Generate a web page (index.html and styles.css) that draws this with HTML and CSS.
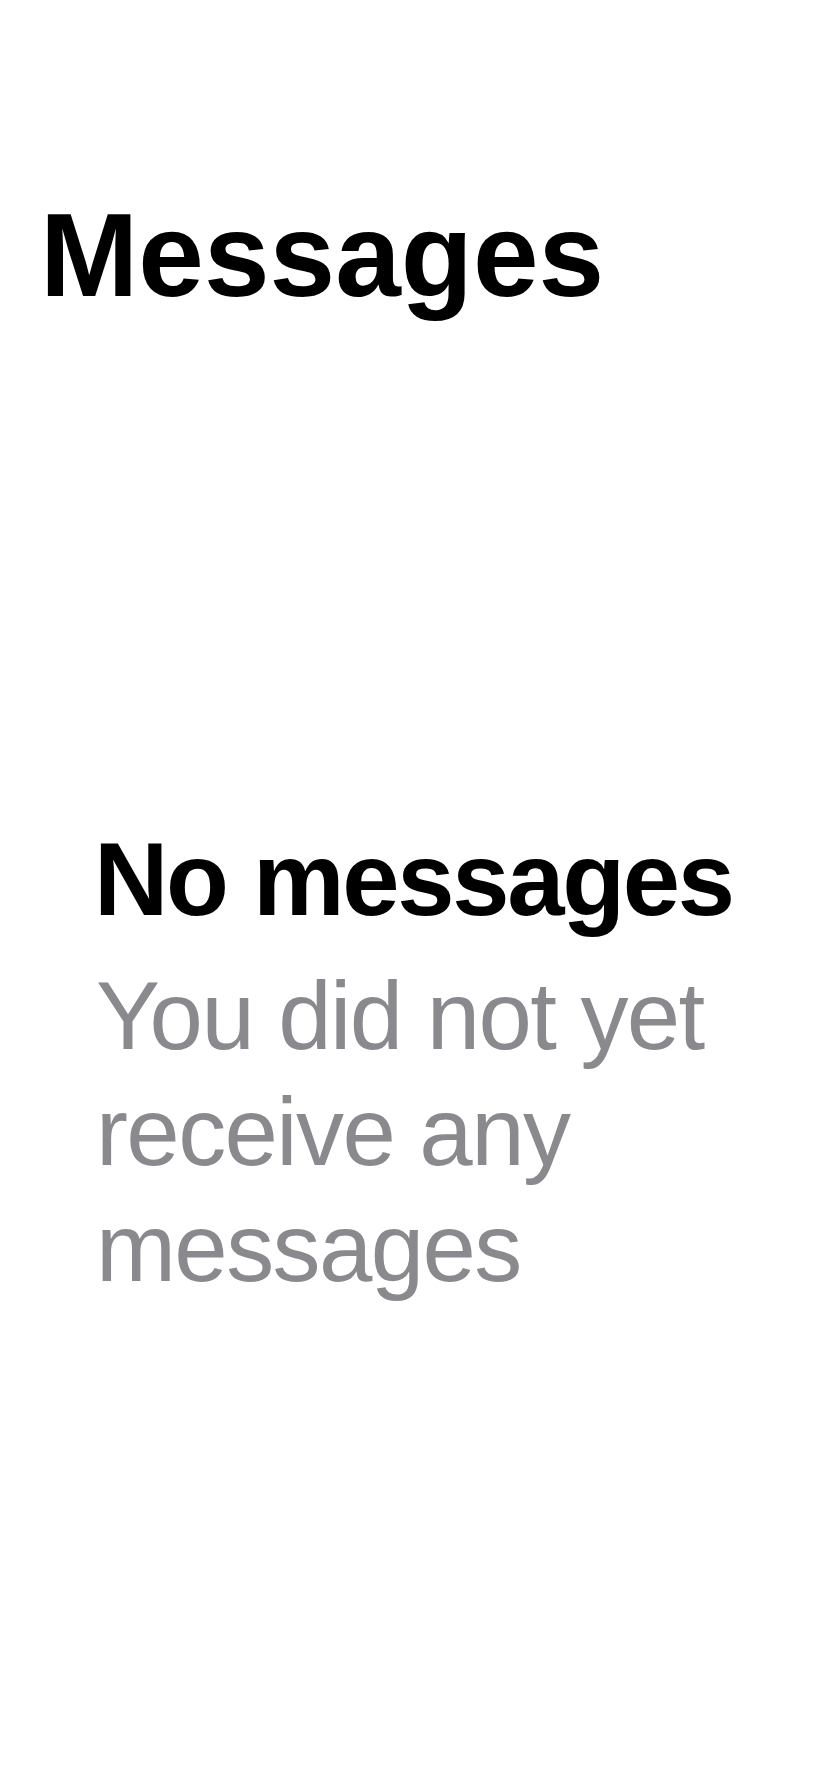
FILE: index.html
```html
<!DOCTYPE html>
<html lang="en">
<head>
<meta charset="utf-8">
<title>Messages</title>
<link rel="stylesheet" href="styles.css">
</head>
<body>
<div class="screen">
  <header class="header">
    <h1 class="large-title">Messages</h1>
  </header>
  <main class="empty">
    <h2 class="empty-title">No messages</h2>
    <p class="empty-text">You did not yet receive any messages</p>
  </main>
</div>
</body>
</html>
```
FILE: styles.css
```css
html, body {
  margin: 0;
  padding: 0;
  background: #ffffff;
}
body {
  font-family: "Liberation Sans", Arial, sans-serif;
  color: #000000;
}
.screen {
  width: 828px;
  min-height: 1792px;
  display: flex;
  flex-direction: column;
}
.header {
  padding: 185px 40px 0 40px;
}
.large-title {
  margin: 0;
  font-size: 118px;
  line-height: 1.2;
  font-weight: 700;
  letter-spacing: 0;
}
.empty {
  padding: 491px 60px 0 94px;
  display: flex;
  flex-direction: column;
}
.empty-title {
  margin: 0;
  font-size: 103px;
  line-height: 1.2;
  font-weight: 700;
  letter-spacing: -2.3px;
  white-space: nowrap;
}
.empty-text {
  margin: 17px 0 0 2px;
  font-size: 96px;
  line-height: 116px;
  font-weight: 400;
  color: #8a8a8e;
  letter-spacing: -1.6px;
}
```
